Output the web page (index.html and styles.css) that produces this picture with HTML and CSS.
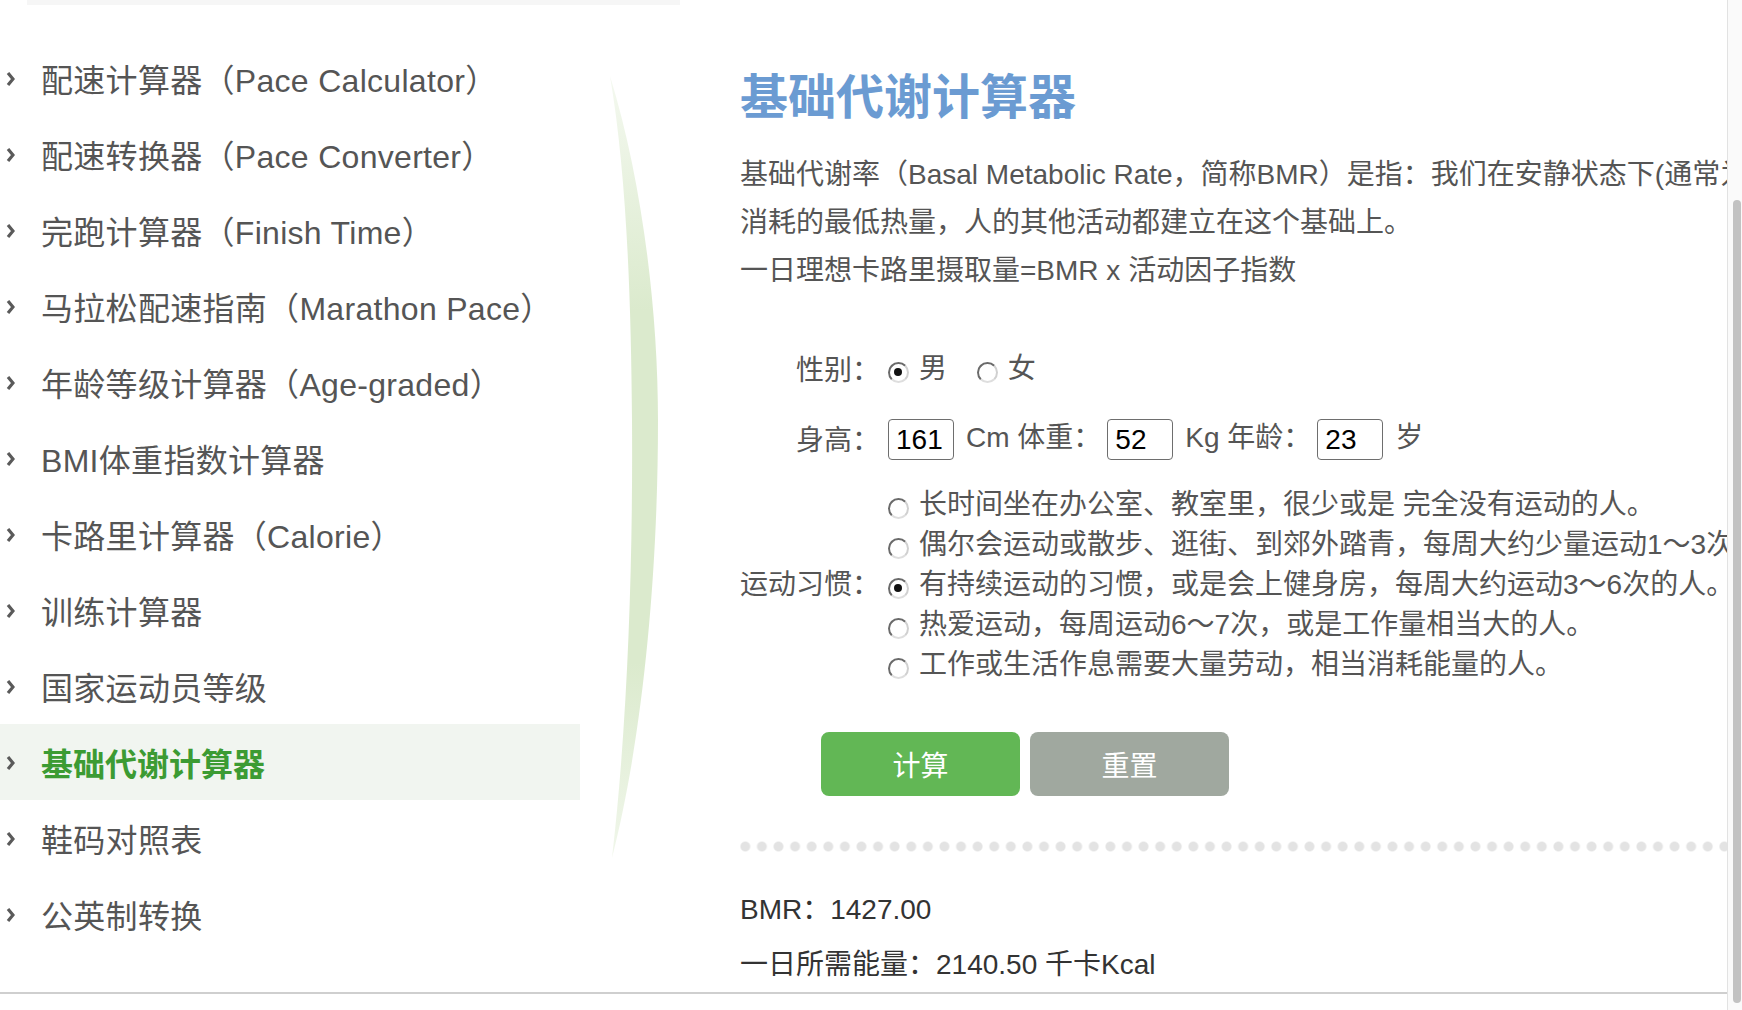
FILE: index.html
```html
<!DOCTYPE html>
<html lang="zh-CN">

<head>
    <meta charset="UTF-8">
    <meta name="viewport" content="width=device-width, initial-scale=1.0">
    <title>基础代谢计算器</title>
    <link rel="stylesheet" href="styles.css">
</head>

<body>
    <div class="page">
        <div class="frame">
            <div class="top-band"></div>
            <div class="layout">
                <ul class="side-nav">
                    <li><svg class="arrow" viewBox="0 0 9 16"><polyline points="2,2 7,8 2,14"/></svg>配速计算器（Pace Calculator）</li>
                    <li><svg class="arrow" viewBox="0 0 9 16"><polyline points="2,2 7,8 2,14"/></svg>配速转换器（Pace Converter）</li>
                    <li><svg class="arrow" viewBox="0 0 9 16"><polyline points="2,2 7,8 2,14"/></svg>完跑计算器（Finish Time）</li>
                    <li><svg class="arrow" viewBox="0 0 9 16"><polyline points="2,2 7,8 2,14"/></svg>马拉松配速指南（Marathon Pace）</li>
                    <li><svg class="arrow" viewBox="0 0 9 16"><polyline points="2,2 7,8 2,14"/></svg>年龄等级计算器（Age-graded）</li>
                    <li><svg class="arrow" viewBox="0 0 9 16"><polyline points="2,2 7,8 2,14"/></svg>BMI体重指数计算器</li>
                    <li><svg class="arrow" viewBox="0 0 9 16"><polyline points="2,2 7,8 2,14"/></svg>卡路里计算器（Calorie）</li>
                    <li><svg class="arrow" viewBox="0 0 9 16"><polyline points="2,2 7,8 2,14"/></svg>训练计算器</li>
                    <li><svg class="arrow" viewBox="0 0 9 16"><polyline points="2,2 7,8 2,14"/></svg>国家运动员等级</li>
                    <li class="active"><svg class="arrow" viewBox="0 0 9 16"><polyline points="2,2 7,8 2,14"/></svg>基础代谢计算器</li>
                    <li><svg class="arrow" viewBox="0 0 9 16"><polyline points="2,2 7,8 2,14"/></svg>鞋码对照表</li>
                    <li><svg class="arrow" viewBox="0 0 9 16"><polyline points="2,2 7,8 2,14"/></svg>公英制转换</li>
                </ul>

                <div class="leaf">
                    <svg width="70" height="810" viewBox="0 0 70 810">
                        <defs>
                            <linearGradient id="leafFill" x1="0" y1="0" x2="0" y2="1">
                                <stop offset="0" stop-color="#dbeacd" stop-opacity="0.3"/>
                                <stop offset="0.3" stop-color="#dbeacd" stop-opacity="1"/>
                                <stop offset="0.75" stop-color="#dbeacd" stop-opacity="1"/>
                                <stop offset="1" stop-color="#dbeacd" stop-opacity="0.4"/>
                            </linearGradient>
                        </defs>
                        <path d="M10,16 C42,120 58,250 58,360 C58,520 42,680 12,798 C28,660 33,500 32,360 C31,230 26,110 10,16 Z" fill="url(#leafFill)"/>
                    </svg>
                </div>

                <div class="main">
                    <h1 class="title">基础代谢计算器</h1>
                    <p class="intro">基础代谢率（Basal Metabolic Rate，简称BMR）是指：我们在安静状态下(通常为静卧状态)<br>消耗的最低热量，人的其他活动都建立在这个基础上。<br>一日理想卡路里摄取量=BMR x 活动因子指数</p>

                    <div class="form">
                        <div class="form-row">
                            <div class="label">性别：</div>
                            <div class="field">
                                <label class="choice"><input type="radio" name="sex" checked>男</label>
                                <label class="choice"><input type="radio" name="sex">女</label>
                            </div>
                        </div>

                        <div class="form-row size-row">
                            <div class="label">身高：</div>
                            <div class="field">
                                <input class="num" type="text" value="161">Cm 体重：<input class="num" type="text" value="52">Kg 年龄：<input class="num" type="text" value="23">岁
                            </div>
                        </div>

                        <div class="form-row habit-row">
                            <div class="label">运动习惯：</div>
                            <div class="field options">
                                <label class="choice"><input type="radio" name="habit">长时间坐在办公室、教室里，很少或是 完全没有运动的人。</label>
                                <label class="choice"><input type="radio" name="habit">偶尔会运动或散步、逛街、到郊外踏青，每周大约少量运动1～3次的人。</label>
                                <label class="choice"><input type="radio" name="habit" checked>有持续运动的习惯，或是会上健身房，每周大约运动3～6次的人。</label>
                                <label class="choice"><input type="radio" name="habit">热爱运动，每周运动6～7次，或是工作量相当大的人。</label>
                                <label class="choice"><input type="radio" name="habit">工作或生活作息需要大量劳动，相当消耗能量的人。</label>
                            </div>
                        </div>
                    </div>

                    <div class="buttons">
                        <button class="btn btn-calc">计算</button>
                        <button class="btn btn-reset">重置</button>
                    </div>

                    <div class="dots"></div>

                    <div class="result">
                        <div>BMR：1427.00</div>
                        <div>一日所需能量：2140.50 千卡Kcal</div>
                    </div>
                </div>
            </div>
        </div>

        <div class="scrollbar">
            <div class="thumb"></div>
        </div>
    </div>
</body>

</html>
```

FILE: styles.css
```css
body {
    margin: 0;
    background-color: #fff;
    font-family: "Liberation Sans", "Noto Sans CJK SC", sans-serif;
    color: #555;
}

.page {
    display: flex;
    width: 1742px;
    height: 1010px;
    overflow: hidden;
}

.frame {
    width: 1727px;
    height: 992px;
    flex-shrink: 0;
    overflow: hidden;
    border-bottom: 2px solid #cfcfcf;
}

.top-band {
    width: 653px;
    height: 5px;
    margin-left: 27px;
    background-color: #f6f6f6;
}

.layout {
    display: flex;
}

/* left menu */
.side-nav {
    list-style: none;
    margin: 0;
    padding: 35px 0 0 0;
    width: 580px;
    flex-shrink: 0;
}

.side-nav li {
    display: flex;
    align-items: center;
    height: 76px;
    padding-left: 6px;
    font-size: 32px;
    letter-spacing: 0.3px;
    color: #555;
    white-space: nowrap;
}

.side-nav li.active {
    background-color: #f1f5f0;
    color: #3c9b33;
    font-weight: bold;
    letter-spacing: 0;
}

.arrow {
    width: 9px;
    height: 16px;
    margin: 2px 26px 0 0;
    flex-shrink: 0;
}

.arrow polyline {
    fill: none;
    stroke: #5a5a5a;
    stroke-width: 3.2;
}

.leaf {
    width: 140px;
    flex-shrink: 0;
    padding: 55px 0 0 20px;
}

.leaf svg {
    display: block;
}

/* main area */
.main {
    width: 1300px;
    flex-shrink: 0;
    padding-top: 63px;
}

.title {
    margin: 0;
    font-size: 48px;
    line-height: 60px;
    font-weight: bold;
    color: #6b9bd2;
}

.intro {
    margin: 23px 0 0 0;
    font-size: 28px;
    line-height: 48px;
    white-space: nowrap;
}

.form {
    margin-top: 53px;
    font-size: 28px;
}

.form-row {
    display: flex;
    align-items: center;
}

.form-row .label {
    width: 140px;
    text-align: right;
    flex-shrink: 0;
}

.form-row .field {
    padding-left: 8px;
    white-space: nowrap;
}

.form-row:first-child {
    height: 40px;
}

.size-row {
    height: 41px;
    margin-top: 29px;
}

.habit-row {
    margin-top: 24px;
}

.options {
    display: flex;
    flex-direction: column;
}

.choice {
    display: inline-flex;
    align-items: center;
    height: 40px;
    margin-right: 22px;
}

.choice input[type="radio"] {
    appearance: none;
    -webkit-appearance: none;
    width: 21px;
    height: 21px;
    margin: 12px 10px 0 0;
    border-radius: 50%;
    border: 2.5px solid;
    border-color: #6a6a6a #d0d0d0 #dedede #6a6a6a;
    background: #fff;
    box-sizing: border-box;
    position: relative;
    flex-shrink: 0;
}

.choice input[type="radio"]:checked::after {
    content: "";
    position: absolute;
    left: 4px;
    top: 4px;
    width: 8px;
    height: 8px;
    border-radius: 50%;
    background-color: #111;
}

.num {
    width: 66px;
    height: 41px;
    box-sizing: border-box;
    padding: 0 7px;
    margin: 0 12px 0 6px;
    border: 1.5px solid #6e6e6e;
    border-radius: 4px;
    font-family: "Liberation Sans", sans-serif;
    font-size: 28px;
    color: #000;
    vertical-align: middle;
}

.size-row .num:first-child {
    margin-left: 0;
}

.buttons {
    display: flex;
    gap: 10px;
    margin: 50px 0 0 81px;
}

.btn {
    width: 199px;
    height: 64px;
    border: none;
    border-radius: 8px;
    color: #fff;
    font-family: "Liberation Sans", "Noto Sans CJK SC", sans-serif;
    font-size: 28px;
    cursor: pointer;
}

.btn-calc {
    background-color: #62b755;
}

.btn-reset {
    background-color: #a0a89f;
}

.dots {
    height: 11px;
    margin-top: 45px;
    background-image: radial-gradient(circle, #e3e3e3 4.2px, rgba(227, 227, 227, 0) 5.6px);
    background-size: 16.6px 11px;
    background-position: -3px 0;
}

.result {
    margin-top: 30px;
    font-size: 28px;
    line-height: 55px;
    color: #333;
}

/* page scrollbar */
.scrollbar {
    width: 14px;
    height: 1010px;
    border-left: 1px solid #e2e2e2;
    background-color: #fafafa;
}

.thumb {
    width: 8px;
    height: 803px;
    margin: 200px 0 0 5px;
    border-radius: 4px;
    background-color: #c2c2c2;
}
```
